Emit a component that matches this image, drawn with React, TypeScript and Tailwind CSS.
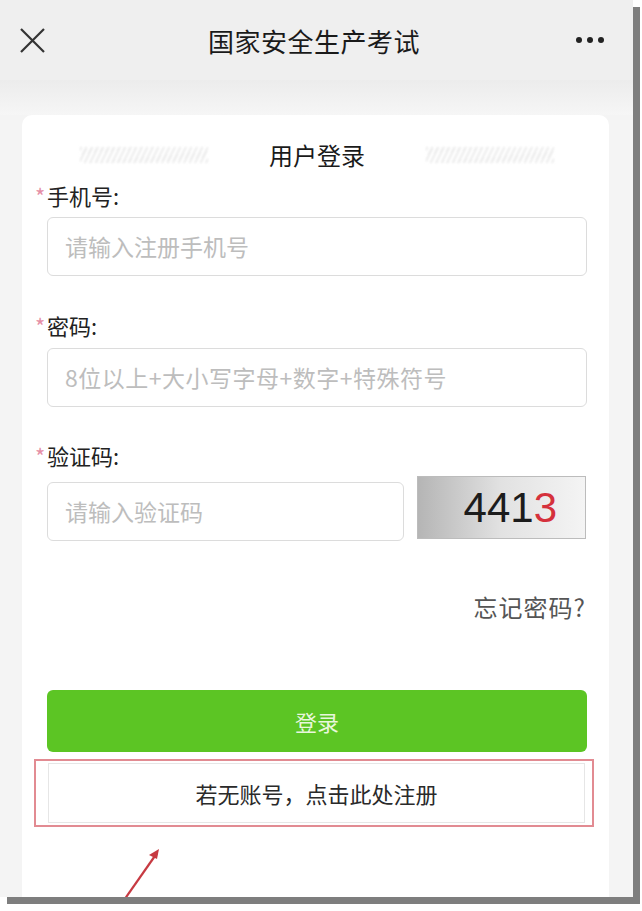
import React from 'react';

const font = { fontFamily: '"Noto Sans CJK SC", "Noto Sans", sans-serif' };

const Label: React.FC<{ text: string }> = ({ text }) => (
  <div className="flex items-center h-[30px] text-[22px] text-[#222] leading-none">
    <span className="text-[#e58fa6] text-[22px] w-[12px]">*</span>
    {text}
  </div>
);

const Field: React.FC<{ placeholder: string; className?: string }> = ({ placeholder, className }) => (
  <div
    className={
      'flex items-center h-[59px] rounded-[6px] border border-[#dcdcdc] bg-white pl-[17px] text-[23px] text-[#bdbdbd] ' +
      (className || '')
    }
  >
    {placeholder}
  </div>
);

const Stripe: React.FC = () => (
  <div className="w-[128px] h-[16px] opacity-50 blur-[1px] bg-[repeating-linear-gradient(115deg,#d4d4d4_0_2px,transparent_2px_5px)]" />
);

export default function App() {
  return (
    <div className="w-[642px] h-[911px] bg-white" style={font}>
      <div className="relative w-[633px] h-[897px] bg-[#f4f4f4] shadow-[7px_7px_0_#7e7e7e] overflow-hidden flex flex-col">
        {/* Header */}
        <div className="h-[80px] bg-[#efefef] flex items-center justify-between px-[19px] shrink-0">
          <svg width="27" height="27" viewBox="0 0 27 27" className="text-[#333]">
            <path d="M2 2L25 25M25 2L2 25" stroke="currentColor" strokeWidth="2.2" fill="none" />
          </svg>
          <div className="text-[26px] text-[#1a1a1a] tracking-[0.5px] ml-[6px]">国家安全生产考试</div>
          <div className="flex gap-[5px] mr-[10px]">
            <span className="w-[6px] h-[6px] rounded-full bg-[#222]" />
            <span className="w-[6px] h-[6px] rounded-full bg-[#222]" />
            <span className="w-[6px] h-[6px] rounded-full bg-[#222]" />
          </div>
        </div>
        <div className="h-[35px] bg-gradient-to-b from-[#ececec] to-[#f6f6f6] shrink-0" />

        {/* Card */}
        <div className="relative flex-1 mx-[22px] w-[587px] bg-white rounded-t-[10px] pl-[25px] pr-[22px] pt-[22px] flex flex-col">
          <div className="flex items-center justify-between h-[36px] px-[33px]">
            <Stripe />
            <div className="text-[24px] text-[#1a1a1a]">用户登录</div>
            <Stripe />
          </div>

          <div className="mt-[7px] -ml-[12px]">
            <Label text="手机号:" />
          </div>
          <Field placeholder="请输入注册手机号" className="mt-[7px]" />

          <div className="mt-[34px] -ml-[12px]">
            <Label text="密码:" />
          </div>
          <Field placeholder="8位以上+大小写字母+数字+特殊符号" className="mt-[8px] h-[58px] tracking-[0.5px]" />

          <div className="mt-[33px] -ml-[12px]">
            <Label text="验证码:" />
          </div>
          <div className="flex items-start mt-[6px]">
            <Field placeholder="请输入验证码" className="w-[357px] mt-[6px] h-[58px]" />
            <div className="ml-[13px] w-[169px] h-[63px] border border-[#bcbcbc] bg-gradient-to-r from-[#b5b5b5] via-[#e2e2e2] to-[#f4f4f4] flex items-center justify-end pr-[28px]">
              <span
                className="text-[42px] leading-none"
                style={{ fontFamily: '"Liberation Sans", Arial, sans-serif' }}
              >
                <span className="text-[#1c1c1c]">441</span>
                <span className="text-[#d5313c]">3</span>
              </span>
            </div>
          </div>

          <div className="mt-[48px] flex justify-end pr-[1px]">
            <span className="text-[24px] text-[#555] tracking-[1px]">忘记密码?</span>
          </div>

          <div className="mt-[65px] h-[62px] rounded-[6px] bg-[#5cc524] flex items-center justify-center text-[22px] text-[#e8f7dc]">
            登录
          </div>

          <div className="mt-[7px] -ml-[13px] w-[560px] h-[68px] border-2 border-[#e28b92] p-[2px] pl-[12px] pr-[7px]">
            <div className="h-full border border-[#e6e6e6] bg-white flex items-center justify-center text-[22px] text-[#2a2a2a]">
              若无账号，点击此处注册
            </div>
          </div>

          {/* annotation arrow */}
          <svg className="absolute left-[92px] top-[730px]" width="50" height="60" viewBox="0 0 50 60">
            <path d="M8 58L43 8" stroke="#c73a42" strokeWidth="2.2" fill="none" />
            <path d="M45 4L35 10L43 14Z" fill="#c73a42" />
          </svg>
        </div>
      </div>
    </div>
  );
}
